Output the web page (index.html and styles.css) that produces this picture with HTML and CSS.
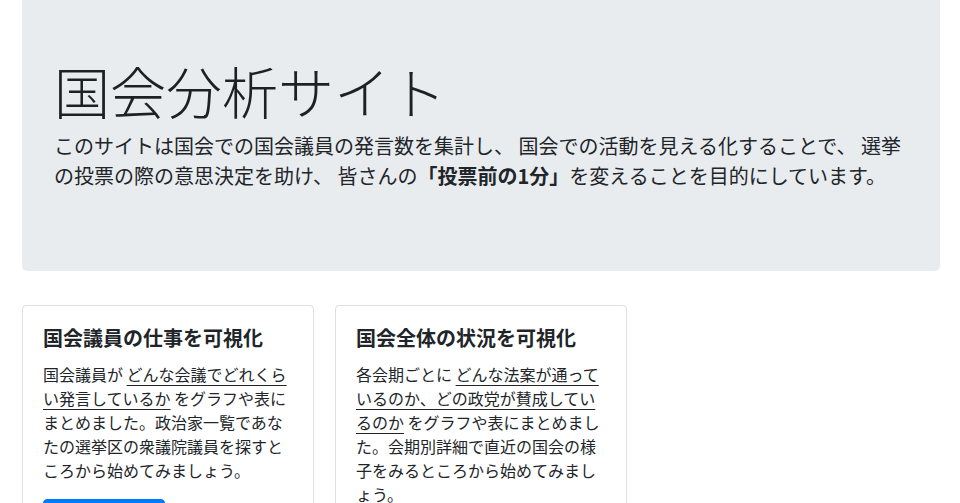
FILE: index.html
```html
<!DOCTYPE html>
<html lang="ja">
<head>
<meta charset="utf-8">
<title>国会分析サイト</title>
<link rel="stylesheet" href="styles.css">
</head>
<body>
<main class="container">
  <section class="jumbotron">
    <h1 class="display">国会分析サイト</h1>
    <p class="lead">このサイトは国会での国会議員の発言数を集計し、 国会での活動を見える化することで、 選挙の投票の際の意思決定を助け、 皆さんの<strong>「投票前の1分」</strong>を変えることを目的にしています。</p>
  </section>
  <div class="cards">
    <article class="card">
      <h5 class="card-title">国会議員の仕事を可視化</h5>
      <p class="card-text">国会議員が <a href="#">どんな会議でどれくらい発言しているか</a> をグラフや表にまとめました。政治家一覧であなたの選挙区の衆議院議員を探すところから始めてみましょう。</p>
      <a class="btn" href="#">政治家一覧へ</a>
    </article>
    <article class="card">
      <h5 class="card-title">国会全体の状況を可視化</h5>
      <p class="card-text">各会期ごとに <a href="#">どんな法案が通っているのか、どの政党が賛成しているのか</a> をグラフや表にまとめました。会期別詳細で直近の国会の様子をみるところから始めてみましょう。</p>
      <a class="btn" href="#">会期別詳細へ</a>
    </article>
    <div class="spacer"></div>
  </div>
</main>
</body>
</html>
```

FILE: styles.css
```css
* { box-sizing: border-box; }
html, body { margin: 0; padding: 0; }
body {
  font-family: "Noto Sans CJK JP", "Noto Sans", sans-serif;
  font-size: 16px;
  line-height: 1.5;
  color: #212529;
  background: #fff;
}
.container {
  width: 918px;
  margin-left: 22px;
}
.jumbotron {
  background: #e9ecef;
  padding: 56px 32px 64px;
  border-radius: 0 0 5px 5px;
  margin-bottom: 34px;
}
.display {
  font-size: 56px;
  font-weight: 300;
  line-height: 1.2;
  margin: 0 0 8px;
  color: #1e2124;
}
.lead {
  font-size: 20px;
  font-weight: 400;
  line-height: 30px;
  margin: 0 0 16px;
}
.lead strong { font-weight: 700; }
.cards {
  display: grid;
  grid-template-columns: repeat(3, 292px);
  gap: 21px;
}
.card {
  border: 1px solid rgba(0,0,0,.125);
  border-radius: 4px;
  padding: 20px;
}
.card-title {
  font-size: 20px;
  font-weight: 700;
  line-height: 1.2;
  margin: 0 0 12px;
}
.card-text { margin: 0 0 17px; }
.card-text a {
  color: #212529;
  text-decoration: underline;
  text-underline-offset: 4px;
}
.btn {
  display: inline-block;
  padding: 6px 12px;
  border: 1px solid #007bff;
  border-radius: 4px;
  background: #007bff;
  color: #fff;
  text-decoration: none;
  line-height: 24px;
}
```
